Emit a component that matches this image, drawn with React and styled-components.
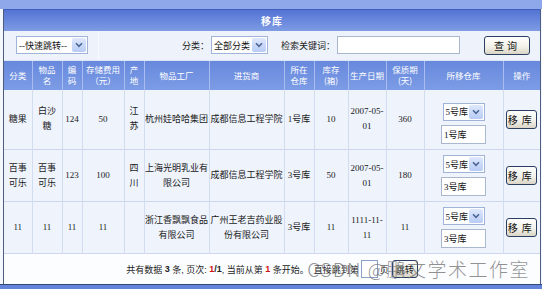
import React from 'react';
import styled, {createGlobalStyle} from 'styled-components';

const GlobalStyle = createGlobalStyle`
  html, body {
    margin: 0;
    padding: 0;
    background: #f4f7fd;
  }
  body {
    font-family: "Liberation Serif", "Noto Sans CJK SC", serif;
  }
`;

const Page = styled.div`
  width: 542px;
  height: 289px;
  overflow: hidden;
  display: flex;
  flex-direction: column;
  background: #f4f7fd;
`;

const TopStrip = styled.div`
  height: 9px;
  background: #8ea8ea;
`;

const Frame = styled.div`
  margin-left: 3px;
  width: 536px;
  border-left: 1px solid #4d5d80;
  border-right: 1px solid #4d5d80;
  display: flex;
  flex-direction: column;
  position: relative;
`;

const TitleBar = styled.div`
  height: 22px;
  background: linear-gradient(#5474d4, #7e9be4);
  border-top: 1px solid #3e5fc0;
  box-sizing: border-box;
  display: flex;
  align-items: center;
  justify-content: center;
  color: #fff;
  font: bold 10px "Noto Sans CJK SC", sans-serif;
  letter-spacing: 1px;
`;

const FilterRow = styled.div`
  height: 30px;
  display: grid;
  grid-template-columns: 94px 1fr;
  background: #eef2fb;
  border-bottom: 1px solid #dbe3f5;
  box-sizing: border-box;
`;

const FilterCell = styled.div`
  display: flex;
  align-items: center;
  justify-content: ${p => p.$end ? 'flex-end' : 'flex-start'};
  padding: ${p => p.$end ? '0 10px 0 0' : '0 0 0 12px'};
  border-left: ${p => p.$end ? '1px solid #f8faff' : 'none'};
  font: 9px "Noto Sans CJK SC", sans-serif;
  color: #222;
`;

const Label = styled.span`
  margin-left: ${p => p.$gap || 0}px;
  margin-right: 2px;
  white-space: nowrap;
`;

const FakeSelect = styled.div`
  width: ${p => p.$w}px;
  height: 18px;
  box-sizing: border-box;
  border: 1px solid #9fb4d8;
  background: #fff;
  display: flex;
  align-items: stretch;
  font: 9px "Liberation Serif", "Noto Sans CJK SC", serif;
  color: #111;
`;

const SelectText = styled.span`
  flex: 1;
  display: flex;
  align-items: center;
  padding-left: 2px;
  white-space: nowrap;
  overflow: hidden;
`;

const SelectArrow = styled.span`
  width: 14px;
  margin: 1px;
  border-radius: 2px;
  background: linear-gradient(#dfe8fd, #b7cbf5);
  display: flex;
  align-items: center;
  justify-content: center;
`;

const TextBox = styled.div`
  width: ${p => p.$w}px;
  height: ${p => p.$h || 18}px;
  box-sizing: border-box;
  border: 1px solid #a9b7cf;
  background: #fff;
  display: flex;
  align-items: center;
  padding-left: 2px;
  font: 9px "Liberation Serif", "Noto Sans CJK SC", serif;
  color: #111;
`;

const XPButton = styled.button`
  width: ${p => p.$w}px;
  height: ${p => p.$h}px;
  margin-left: ${p => p.$gap || 0}px;
  padding: 0;
  border: 1px solid #2b3f63;
  border-radius: 3px;
  background: linear-gradient(#ffffff, #f1efe6 60%, #d9d4c6);
  font: 10px "Noto Sans CJK SC", sans-serif;
  letter-spacing: ${p => p.$ls || 3}px;
  color: #111;
  display: inline-flex;
  align-items: center;
  justify-content: center;
`;

const Table = styled.table`
  width: 536px;
  border-collapse: collapse;
  table-layout: fixed;
`;

const HeadCell = styled.th`
  height: 29px;
  padding: 0;
  background: linear-gradient(#6788dc, #7c9ce6);
  border-right: 1px solid #a9bdf0;
  color: #fff;
  font: normal 8.5px/11px "Noto Sans CJK SC", sans-serif;
  text-align: center;
  white-space: nowrap;
  &:last-child { border-right: none; }
`;

const Row = styled.tr`
  height: ${p => p.$h}px;
  background: #eef3fc;
  border-bottom: 1px solid #cdd8f0;
`;

const Cell = styled.td`
  padding: 0;
  border-right: 1px solid #d3ddf2;
  text-align: center;
  vertical-align: middle;
  font-size: 9px;
  line-height: 15px;
  color: #1a1a1a;
  white-space: nowrap;
  overflow: hidden;
  &:last-child { border-right: none; }
`;

const Stack = styled.div`
  display: flex;
  flex-direction: column;
  align-items: center;
  gap: 4px;
  padding-top: ${p => p.$pt || 0}px;
`;

const Footer = styled.div`
  height: 30px;
  background: #fcfdff;
  display: flex;
  align-items: center;
  justify-content: center;
  font: 9px "Liberation Sans", "Noto Sans CJK SC", sans-serif;
  color: #222;
  white-space: pre;
`;

const Strong = styled.b`
  color: ${p => p.$red ? '#d01010' : '#222'};
`;

const JumpBox = styled.span`
  display: inline-block;
  width: 15px;
  height: 16px;
  margin: 0 2px;
  border: 1px solid #8aa0c8;
  background: #fff;
  vertical-align: middle;
`;

const JumpButton = styled.span`
  display: inline-flex;
  align-items: center;
  justify-content: center;
  width: 24px;
  height: 16px;
  margin-left: 3px;
  border: 1px solid #2b3f63;
  border-radius: 3px;
  background: linear-gradient(#fff, #d9d4c6);
  vertical-align: middle;
`;

const Watermark = styled.div`
  position: absolute;
  right: 10px;
  bottom: 2px;
  font: 300 19px "Noto Sans CJK SC", sans-serif;
  letter-spacing: 1.5px;
  color: rgba(110, 110, 110, 0.75);
  white-space: nowrap;
  pointer-events: none;
`;

const BottomBand = styled.div`
  height: 4px;
  background: #6483da;
  border-top: 1px solid #34487a;
`;

const widths = [28, 30, 20, 42, 20, 65, 75, 30, 34, 38, 38, 79, 37];

const headers = [
  ['分类'], ['物品', '名'], ['编', '码'], ['存储费用', '（元）'], ['产', '地'],
  ['物品工厂'], ['进货商'], ['所在', '仓库'], ['库存', '(箱)'], ['生产日期'],
  ['保质期', '(天)'], ['所移仓库'], ['操作'],
];

const rows = [
  {
    h: 60, pt: 8, from: '1号库',
    cells: [['糖果'], ['白沙', '糖'], ['124'], ['50'], ['江', '苏'], ['杭州娃哈哈集团'],
      ['成都信息工程学院'], ['1号库'], ['10'], ['2007-05-', '01'], ['360']],
  },
  {
    h: 52, from: '3号库',
    cells: [['百事', '可乐'], ['百事', '可乐'], ['123'], ['100'], ['四', '川'],
      ['上海光明乳业有', '限公司'], ['成都信息工程学院'], ['3号库'], ['50'], ['2007-05-', '01'], ['180']],
  },
  {
    h: 52, from: '3号库',
    cells: [['11'], ['11'], ['11'], ['11'], [''], ['浙江香飘飘食品', '有限公司'],
      ['广州王老吉药业股', '份有限公司'], ['3号库'], ['11'], ['1111-11-', '11'], ['11']],
  },
];

function Chevron() {
  return (
    <svg width="8" height="6" viewBox="0 0 8 6">
      <path d="M1 1.2 L4 4.3 L7 1.2" fill="none" stroke="#4c6696" strokeWidth="1.6"/>
    </svg>
  );
}

function Select({w, children}) {
  return (
    <FakeSelect $w={w}>
      <SelectText>{children}</SelectText>
      <SelectArrow><Chevron/></SelectArrow>
    </FakeSelect>
  );
}

function Lines({lines}) {
  return lines.map((l, i) => (
    <React.Fragment key={i}>{i > 0 && <br/>}{l}</React.Fragment>
  ));
}

export default function App() {
  return (
    <Page>
      <GlobalStyle/>
      <TopStrip/>
      <Frame>
        <TitleBar>移库</TitleBar>
        <FilterRow>
          <FilterCell>
            <Select w={72}>--快速跳转--</Select>
          </FilterCell>
          <FilterCell $end>
            <Label>分类：</Label>
            <Select w={57}>全部分类</Select>
            <Label $gap={13}>检索关键词：</Label>
            <TextBox $w={123}/>
            <XPButton $w={46} $h={19} $gap={24}>查询</XPButton>
          </FilterCell>
        </FilterRow>
        <Table>
          <colgroup>
            {widths.map((w, i) => <col key={i} style={{width: w}}/>)}
          </colgroup>
          <thead>
            <tr>
              {headers.map((h, i) => <HeadCell key={i}><Lines lines={h}/></HeadCell>)}
            </tr>
          </thead>
          <tbody>
            {rows.map((r, ri) => (
              <Row key={ri} $h={r.h}>
                {r.cells.map((c, ci) => <Cell key={ci}><Lines lines={c}/></Cell>)}
                <Cell>
                  <Stack $pt={r.pt}>
                    <Select w={42}>5号库</Select>
                    <TextBox $w={45} $h={19}>{r.from}</TextBox>
                  </Stack>
                </Cell>
                <Cell>
                  <XPButton $w={31} $h={19} $ls={4}>移库</XPButton>
                </Cell>
              </Row>
            ))}
          </tbody>
        </Table>
        <Footer>
          共有数据 <Strong>3</Strong> 条, 页次: <Strong $red>1</Strong><Strong>/1</Strong>, 当前从第 <Strong $red>1</Strong> 条开始。  直接跳到第<JumpBox/>页<JumpButton>跳转</JumpButton>
        </Footer>
        <Watermark>CSDN @鹏文学术工作室</Watermark>
      </Frame>
      <BottomBand/>
    </Page>
  );
}
